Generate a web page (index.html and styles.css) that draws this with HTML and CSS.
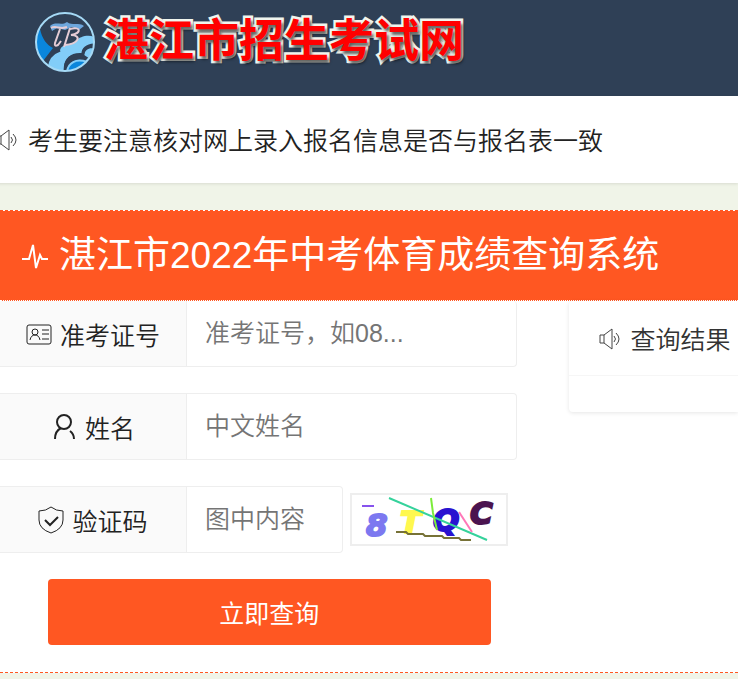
FILE: index.html
```
<!DOCTYPE html>
<html lang="zh-CN">
<head>
    <meta charset="UTF-8">
    <meta name="viewport" content="width=device-width, initial-scale=1.0">
    <title>湛江市2022年中考体育成绩查询系统</title>
    <link rel="stylesheet" href="styles.css">
</head>
<body>

    <header class="header">
        <svg class="logo" viewBox="0 0 62 62" aria-hidden="true">
            <defs>
                <clipPath id="ball"><circle cx="31" cy="31" r="29"/></clipPath>
            </defs>
            <g clip-path="url(#ball)">
                <path d="M0 20 L6 18 C8 28 13 34 19 37 L9 50 L0 46Z" fill="#0a86dc"/>
                <path d="M11 62 C13 51 16 43 26 39 C28 32 38 34 42 30 C46 25 56 23 62 27 L62 36 C52 33 48 38 48 42 C37 41 31 47 30 55 L31 62Z" fill="#82cdf8"/>
                <path d="M34 62 C34 52 41 46 51 50 L59 43 L57 55 L45 62Z" fill="#0a86dc"/>
                <path d="M50 44 C51 38 56 36 62 38 L58 49Z" fill="#82cdf8"/>
                <path d="M12 57 C13 48 17 42 26 39 M31 60 C31 48 38 43 49 45 C48 38 53 34 61 34" fill="none" stroke="#2f4056" stroke-width="3"/>
                <path d="M33 61 C34 52 42 47 53 51" fill="none" stroke="#82cdf8" stroke-width="2"/>
            </g>
            <path d="M16 15 C21 10 28 15 33 11 C38 15 45 11 50 15 L45 19 L38 16 L31 19 L23 17 L18 20Z" fill="#6da6dc"/>
            <path d="M17 17 C22 14 26 19 33 16 M26 18 L21 32 Q20 36 24 34 L27 30 M36 17 L30 36 M36 18 C47 15 48 22 37 24 C48 24 45 33 31 34" fill="none" stroke="#e5ccd5" stroke-width="2"/>
            <circle cx="31" cy="31" r="29" fill="none" stroke="#a5d9f5" stroke-width="2"/>
        </svg>
        <span class="site-name">湛江市招生考试网</span>
    </header>

    <div class="notice">
        <svg class="icon-sound" viewBox="0 0 22 22" aria-hidden="true">
            <path d="M1 7 H5 L13 1 V21 L5 15 H1Z M5 7 V15 M15 8 Q18 11 15 14 M17 5 Q23 11 17 17"/>
        </svg>
        <span>考生要注意核对网上录入报名信息是否与报名表一致</span>
    </div>

    <main class="panel">
        <h1 class="panel-title">
            <svg class="icon-pulse" viewBox="0 0 26 26" aria-hidden="true">
                <path d="M0 16 H7 L11 2 L14 25 L18 12 L20 16 H26"/>
            </svg>
            <span>湛江市2022年中考体育成绩查询系统</span>
        </h1>

        <div class="panel-body">
            <form class="query-form">
                <div class="form-item">
                    <label class="form-label" for="number">
                        <svg class="icon" viewBox="0 0 26 28" aria-hidden="true">
                            <rect x="1" y="5" width="24" height="19" rx="2"/>
                            <circle cx="9" cy="12" r="3"/>
                            <path d="M4 20 Q5 15 9 15 Q13 15 14 20 M16 10 H23 M16 14 H23 M16 19 H23"/>
                        </svg>
                        准考证号
                    </label>
                    <input class="form-input" type="text" id="number" placeholder="准考证号，如08...">
                </div>
                <div class="form-item">
                    <label class="form-label" for="name">
                        <svg class="icon icon-bold" viewBox="0 0 26 28" aria-hidden="true">
                            <circle cx="13" cy="9" r="7"/>
                            <path d="M10 15 Q4 18 4 26 M19 18 Q23 21 23 26"/>
                        </svg>
                        姓名
                    </label>
                    <input class="form-input" type="text" id="name" placeholder="中文姓名">
                </div>
                <div class="form-item">
                    <label class="form-label" for="code">
                        <svg class="icon" viewBox="0 0 26 28" aria-hidden="true">
                            <path d="M13 1 Q18 5 25 5 V14 Q25 23 13 27 Q1 23 1 14 V5 Q8 5 13 1Z"/>
                            <path class="check" d="M7 14 L12 19 L20 11"/>
                        </svg>
                        验证码
                    </label>
                    <input class="form-input code-input" type="text" id="code" placeholder="图中内容">
                    <svg class="captcha" viewBox="0 0 158 53" role="img" aria-label="验证码图片">
                        <rect x="1" y="1" width="156" height="51" fill="#fff" stroke="#eee" stroke-width="2"/>
                        <g class="captcha-text">
                            <text x="16" y="43" fill="#7c78f0" stroke="#7c78f0">8</text>
                            <text x="50" y="40" fill="#fff84e" stroke="#fff84e">T</text>
                            <text x="83" y="38" fill="#2912d0" stroke="#2912d0">Q</text>
                            <text x="120" y="31" fill="#4b1450" stroke="#4b1450">C</text>
                        </g>
                        <g fill="none" stroke-width="2">
                            <path d="M12 13 H24" stroke="#8753ed"/>
                            <path d="M39 5 L137 47" stroke="#35d29b"/>
                            <path d="M81 5 L83 20 L87 37" stroke="#7cec3b"/>
                            <path d="M109 19 L122 39" stroke="#ff77b8"/>
                            <path d="M46 39 H56 L58 41 H73 L75 43 H92 L94 45 H109 L111 47 H121" stroke="#777237"/>
                        </g>
                    </svg>
                </div>
                <button class="submit" type="button">立即查询</button>
            </form>

            <section class="card">
                <h2 class="card-header">
                    <svg class="icon-sound" viewBox="0 0 22 22" aria-hidden="true">
                        <path d="M1 7 H5 L13 1 V21 L5 15 H1Z M5 7 V15 M15 8 Q18 11 15 14 M17 5 Q23 11 17 17"/>
                    </svg>
                    <span>查询结果</span>
                </h2>
                <div class="card-body"></div>
            </section>
        </div>
    </main>

</body>
</html>
```
FILE: styles.css
```
* {
    box-sizing: border-box;
}
body {
    margin: 0;
    background-color: #f0f4e8;
    color: #222;
    font-family: "Liberation Sans", "Noto Sans CJK SC", sans-serif;
    font-size: 25px;
    font-weight: 350;
    line-height: 36px;
    overflow-x: hidden;
}
svg {
    flex-shrink: 0;
}
.header {
    display: flex;
    align-items: center;
    gap: 8px;
    padding: 8px 34px 20px;
    background-color: #2f4056;
}
.logo {
    width: 62px;
    height: 62px;
}
.site-name {
    color: #f00;
    font-size: 45px;
    font-weight: 700;
    line-height: 68px;
    white-space: nowrap;
    -webkit-text-stroke: 5px #f0f5ee;
    paint-order: stroke fill;
    text-shadow: 2px 3px 3px rgba(0, 0, 0, 0.6);
}
.notice {
    display: flex;
    align-items: center;
    gap: 10px;
    margin-bottom: 27px;
    padding: 27px 0 24px;
    background-color: white;
    box-shadow: 0 1px 3px rgba(0, 0, 0, 0.1);
    margin-left: -4px;
    white-space: nowrap;
}
.icon-sound {
    width: 22px;
    height: 22px;
    margin-bottom: 2px;
    fill: none;
    stroke: #444;
    stroke-width: 1;
}
.panel {
    background-color: white;
    border-top: 1px dashed #ff5722;
    border-bottom: 1px dashed #ff5722;
}
.panel-title {
    display: flex;
    align-items: center;
    gap: 11px;
    margin: 0;
    padding: 18px 22px 17px;
    background-color: #ff5722;
    border-bottom: 1px dotted white;
    color: white;
    font-size: 37px;
    font-weight: 400;
    line-height: 54px;
    white-space: nowrap;
}
.icon-pulse {
    width: 26px;
    height: 26px;
    fill: none;
    stroke: white;
    stroke-width: 2;
}
.panel-body {
    display: flex;
    align-items: flex-start;
}
.query-form {
    width: 70%;
    padding-bottom: 27px;
}
.form-item {
    display: flex;
    align-items: center;
    margin-bottom: 26px;
}
.form-item:first-child .form-label,
.form-item:first-child .form-input {
    height: 66px;
    border-top: none;
}
.form-label {
    display: flex;
    flex-shrink: 0;
    align-items: center;
    justify-content: center;
    gap: 8px;
    width: 187px;
    height: 67px;
    padding-top: 4px;
    background-color: #fafafa;
    border: 1px solid #eee;
    border-width: 1px 1px 1px 0;
}
.icon {
    width: 26px;
    height: 28px;
    margin-bottom: 4px;
    fill: none;
    stroke: #222;
    stroke-width: 1;
}
.icon-bold,
.check {
    stroke-width: 2;
}
.form-input {
    flex: 1;
    min-width: 0;
    height: 67px;
    padding: 0 18px;
    border: 1px solid #eee;
    border-left: none;
    border-radius: 0 4px 4px 0;
    background-color: white;
    color: #222;
    font: inherit;
}
.form-input::placeholder {
    color: #757575;
}
.code-input {
    flex: none;
    width: 156px;
}
.captcha {
    width: 158px;
    height: 53px;
    margin-left: 7px;
}
.captcha-text {
    font-family: "DejaVu Sans", sans-serif;
    font-size: 31px;
    font-weight: bold;
    font-style: italic;
    stroke-width: 2;
}
.submit {
    display: block;
    width: calc(100% - 74px);
    height: 66px;
    margin-left: 48px;
    padding-top: 4px;
    border: none;
    border-radius: 4px;
    background-color: #ff5722;
    color: white;
    font: inherit;
    font-weight: 400;
    cursor: pointer;
}
.card {
    flex: 1;
    margin-left: 52px;
    border-radius: 4px 0 0 4px;
    box-shadow: 0 1px 4px rgba(0, 0, 0, 0.1);
    white-space: nowrap;
}
.card-header {
    display: flex;
    align-items: center;
    gap: 10px;
    margin: 0;
    padding: 21px 0 17px 30px;
    border-bottom: 1px solid #f6f6f6;
    color: #333;
    font-size: 25px;
    font-weight: 350;
}
.card-body {
    height: 36px;
}
```
